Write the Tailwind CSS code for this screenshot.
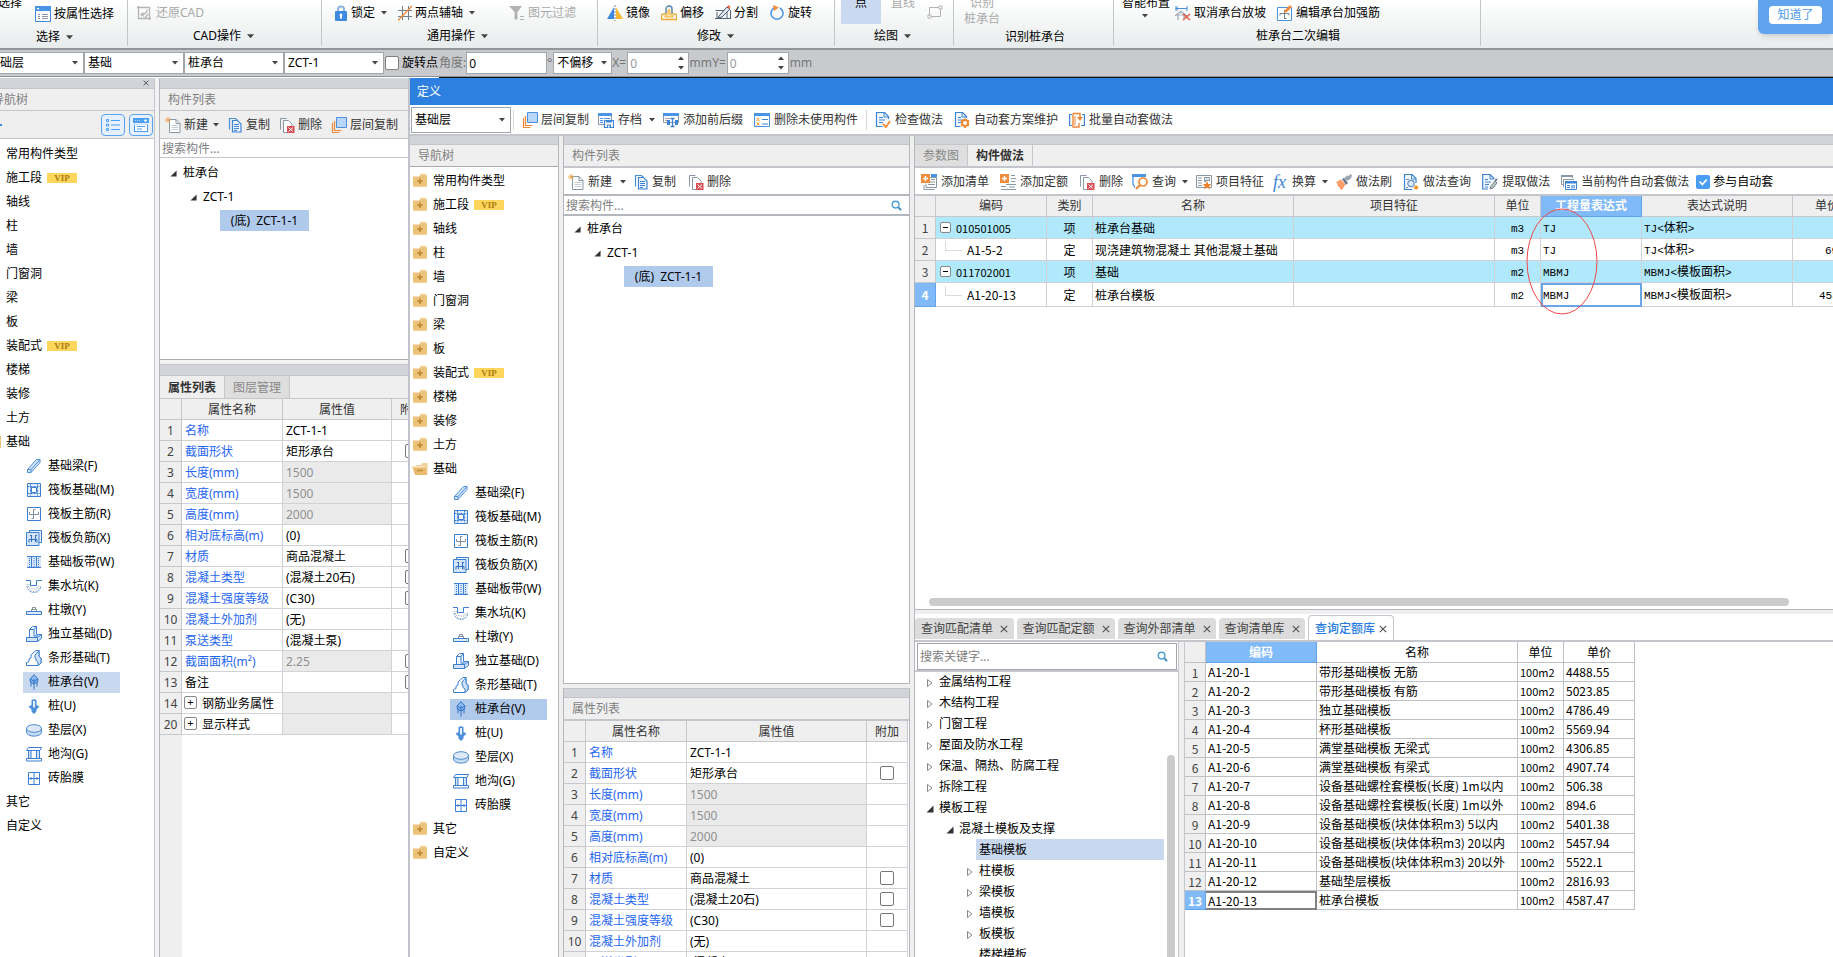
<!DOCTYPE html>
<html lang="zh-CN">
<head>
<meta charset="utf-8">
<title>定义</title>
<script src="https://cdn.jsdelivr.net/npm/@tailwindcss/browser@4"></script>
</head>
<body class="h-screen overflow-hidden flex flex-col relative bg-white text-black text-[12px] leading-[20px] whitespace-nowrap font-['Noto_Sans','Noto_Sans_CJK_SC',sans-serif]">

<svg class="hidden" xmlns="http://www.w3.org/2000/svg">
  <defs>
  <symbol id="i-select" viewBox="0 0 16 16"><path d="M.5.5h15v15H.5z" fill="#fff" stroke="#3f87da"/><path d="M0 0h16v5H0z" fill="#4a94e8"/><path d="M1.500 2h3l-1.500 2z" fill="#fff"/><path d="M3 8.500h2M7 8.500h6M3 10.500h2M7 10.500h6M3 12.500h2M7 12.500h6" stroke="#8a97a5"/></symbol>
  <symbol id="i-cad" viewBox="0 0 16 16"><path d="M2.500 1v12.500H15M1 2.500h12.500V15" fill="none" stroke="#b5b5b5" stroke-width="1.300"/><path d="M5 9.500c4 0 6-2 6-5M9 13l3-4" stroke="#b5b5b5" fill="none" stroke-width="1.300"/><path d="M4 9.500l3.500-2.500v5z" fill="#b5b5b5"/></symbol>
  <symbol id="i-lock" viewBox="0 0 16 16"><path d="M5 7V4.500a3 3 0 016 0V7" fill="none" stroke="#8fb4de" stroke-width="2"/><rect x="2" y="6" width="12" height="10" rx="1" fill="#3d8ae0"/><path d="M8 8.500a1.500 1.500 0 011 2.500v2.500H7V11a1.500 1.500 0 011-2.500z" fill="#fff"/></symbol>
  <symbol id="i-axis" viewBox="0 0 16 16"><path d="M5.500 1v14M11.500 1v14M1 5.500h14M1 11.500h14" stroke="#727f8c"/><path d="M1 15.500L15 1" stroke="#ee8a3c" stroke-width="1.300"/></symbol>
  <symbol id="i-filter" viewBox="0 0 16 16"><path d="M0 1h13L8.500 7v7.500h-3V7z" fill="#b3b3b3"/><path d="M11 11.500h4M11 14.500h4" stroke="#b3b3b3"/></symbol>
  <symbol id="i-mirror" viewBox="0 0 16 16"><path d="M7 2v12H0z" fill="#3d8ae0"/><path d="M9 2v12h7z" fill="#f9b934"/><path d="M8 0v16" stroke="#888" stroke-dasharray="2 1"/></symbol>
  <symbol id="i-offset" viewBox="0 0 16 16"><path d="M5 8.500V4a3 3 0 016 0v4.500l4.500 1V14.500H.5v-5z" fill="none" stroke="#f4a72d" stroke-width="1.300"/><path d="M7 9V5.500a1 1 0 012 0V9l3 1.500v1.500H4v-1.500z" fill="#fbdf9a" stroke="#f4b13d"/><path d="M5 8.500V4a3 3 0 016 0v4.500" fill="none" stroke="#4a94e0" stroke-width="1.300"/></symbol>
  <symbol id="i-split" viewBox="0 0 16 16"><path d="M.5 5.500h9M12 7v6.500H2V7M0 13.500h16M15.500 5v8" fill="none" stroke="#55637a"/><path d="M4 11l8-9 3 2-8 8-4 1z" fill="#dfe7f1" stroke="#4a5568"/><path d="M12 1.500l1.500-1.500 2 2L14 4z" fill="#e76f3c"/></symbol>
  <symbol id="i-rotate" viewBox="0 0 16 16"><path d="M11 3a6 6 0 11-6 0" fill="none" stroke="#4c97e6" stroke-width="1.600"/><path d="M4 0l6 2.500L5 6z" fill="#f2913d"/></symbol>
  <symbol id="i-rect" viewBox="0 0 16 16"><path d="M2.500 3.500h11v9h-11z" fill="none" stroke="#b3b3b3"/><path d="M12 2h3v3h-3zM1 11h3v3H1z" fill="#fff" stroke="#b3b3b3"/></symbol>
  <symbol id="i-cancel" viewBox="0 0 16 16"><path d="M1 1v5M1 3.500h11M3 1.500l-2 2 2 2M12 1v5" fill="none" stroke="#4a8fd8"/><path d="M0 11l6-5 6 5M3 9v6M9 9v4" fill="#d5dbe2" stroke="#8b97a5"/><path d="M8 9l7 6M15 9l-7 6" stroke="#e25b45" stroke-width="1.500"/></symbol>
  <symbol id="i-edit" viewBox="0 0 16 16"><path d="M.5 2.500h14v13H.5z" fill="#fff" stroke="#4a94e0"/><path d="M7.500 5v9M3 8.500h9M3 8.500v2M12 8.500v2M9.500 13.500h-2" fill="none" stroke="#6e7d8d"/><path d="M7 8l1-3 5-5 2 2-5 5z" fill="#f28b3b"/></symbol>
  <symbol id="i-list" viewBox="0 0 16 16"><path d="M1.500 2.500h2v2h-2zM1.500 7h2v2h-2zM1.500 11.500h2v2h-2z" fill="none" stroke="#4a9df0"/><path d="M6 3.500h9M6 8h9M6 12.500h9" stroke="#4a9df0"/></symbol>
  <symbol id="i-panel" viewBox="0 0 16 16"><path d="M0 1h16v5H0zM1 7.500h14V15H1z" fill="#4a9df0"/><path d="M2 3.500h1M4 3.500h1M6 3.500h1M11 3h3l-1.500 2z" stroke="#fff" fill="#fff" stroke-width=".6"/><path d="M2 7.500h12V14H2z" fill="#fff"/><path d="M4 9.500h8M4 12h5" stroke="#4a9df0"/></symbol>
  <symbol id="i-new" viewBox="0 0 16 16"><path d="M4.500 2.500h6.500l4 4v9H4.500z" fill="#fff" stroke="#8a98a6"/><path d="M11 2.500v4h4" fill="none" stroke="#8a98a6"/><path d="M6.500 8.500h7M6.500 10.500h7M6.500 12.500h7" stroke="#c8cfd6"/><path d="M3 0v6M0 3h6M1 1l4 4M5 1L1 5" stroke="#f0982d" stroke-dasharray="1 .5"/></symbol>
  <symbol id="i-copy" viewBox="0 0 16 16"><path d="M2.500 12.500V1.500h6l2 2" fill="none" stroke="#4a8ed8" stroke-width="1.200"/><path d="M5.500 3.500h5l3.500 3.500v8H5.500z" fill="#eef5fd" stroke="#3d84d4" stroke-width="1.200"/><path d="M7 7.500h5M7 9.500h5M7 11.500h5M7 13.500h3" stroke="#3d84d4"/></symbol>
  <symbol id="i-del" viewBox="0 0 16 16"><path d="M1.500 12.500V1.500h6" fill="none" stroke="#8a98a6"/><path d="M4.500 3.500h5l3.500 3.500v8.500H4.500z" fill="#fff" stroke="#8a98a6"/><path d="M8 9h7.500v7H8z" fill="#d84c52"/><path d="M9.500 10.500l4.500 4M14 10.500l-4.500 4" stroke="#fff"/></symbol>
  <symbol id="i-layer" viewBox="0 0 16 16"><path d="M1.500 6v9.500h7M3.500 4v9.500h7" fill="none" stroke="#ee8738" stroke-width="1.200"/><path d="M5.500.5h10v10h-10z" fill="#b8d5fa" stroke="#4a8fe0"/></symbol>
  <symbol id="i-archive" viewBox="0 0 16 16"><path d="M.5 1.500h13v11H.5z" fill="#fff" stroke="#8a98a6"/><path d="M0 1h14v3H0z" fill="#4a94e8"/><path d="M2 6.500h3M2 8.500h3M2 10.500h3M6 6.500h6" stroke="#4a94e8"/><path d="M6.500 8.500h9v7h-9z" fill="#fff" stroke="#3d84d4" stroke-width="1.200"/><path d="M8 8.500h6v2H8zM9 12.500h4v3H9z" fill="#3d84d4"/><path d="M10 13.500h1.500v2H10z" fill="#fff"/></symbol>
  <symbol id="i-affix" viewBox="0 0 16 16"><path d="M.5 1.500h15v9H.5z" fill="#fff" stroke="#8a98a6"/><path d="M0 1h16v3H0z" fill="#4a94e8"/><path d="M2 6.500h5M2 8.500h5" stroke="#9aa7b3"/><path d="M4 8h3v5H4zM12 8h3v5h-3z" fill="#3d84d4"/><path d="M7.500 6.500h4M7.500 14.500h4M9.500 6.500v8" stroke="#3d84d4" stroke-width="1.300"/></symbol>
  <symbol id="i-unused" viewBox="0 0 16 16"><path d="M.5 1.500h15v13H.5z" fill="#fff" stroke="#4a94e8"/><path d="M0 1h16v3H0z" fill="#4a94e8"/><path d="M2.500 6l3 3M5.500 6l-3 3M2.500 10.500l3 3M5.500 10.500l-3 3" stroke="#f0982d"/><path d="M8 7.500h6M8 12h6" stroke="#3d84d4"/></symbol>
  <symbol id="i-check" viewBox="0 0 16 16"><path d="M13.500 7V4.500l-4-4h-8v14h6" fill="#f3f8fe" stroke="#3d84d4" stroke-width="1.200"/><path d="M9 1v4h4.500M4 5.500h4M4 8h6M4 10.500h4" fill="none" stroke="#3d84d4"/><path d="M8 12l3 3 4-6" fill="none" stroke="#f08a35" stroke-width="1.800"/></symbol>
  <symbol id="i-gear" viewBox="0 0 16 16"><path d="M12.500 6V4.500l-4-4h-7v14h5" fill="#f3f8fe" stroke="#3d84d4" stroke-width="1.200"/><path d="M8 1v4h4.500M4 5.500h3M4 8h5M4 10.500h3" fill="none" stroke="#3d84d4"/><circle cx="11" cy="11" r="3" fill="#fff" stroke="#f08a35" stroke-width="2"/><path d="M11 6.500v2M11 13.500v2.500M7 8.500l1.500 1M13.500 12.500l1.500 1M15 8.500l-1.500 1M8.500 12.500L7 13.500" stroke="#f08a35" stroke-width="1.800"/></symbol>
  <symbol id="i-batch" viewBox="0 0 16 16"><path d="M3 13.500H.6V2.500H3M13 2.500h2.400v11H12" fill="none" stroke="#3d84d4" stroke-width="1.200"/><path d="M4 1.500v13.500h6V11M4 1.500h7v4.500" fill="#fff" stroke="#ee8738" stroke-width="1.400"/><path d="M8 5h6l-3 4z" fill="#ee8738"/><path d="M6 4v9" stroke="#ee8738"/></symbol>
  <symbol id="i-addlist" viewBox="0 0 16 16"><path d="M7 3.500h8.500v10H5v-4" fill="#fff" stroke="#8a98a6"/><path d="M10 0h6v3h-6z" fill="#4a94e8"/><path d="M10 5.500h4M7 8h7M7 10.500h7M3 11v4.500h10.500" fill="none" stroke="#8a98a6"/><path d="M0 0h9v9H0z" fill="#ef8e3f"/><path d="M4.500 2v5M2 4.500h5" stroke="#fff" stroke-width="1.400"/></symbol>
  <symbol id="i-addquota" viewBox="0 0 16 16"><path d="M11 1.500h4M11 4.500h5M11 7.500h4M6 10.500h10M1 12.500h5M1 15.500h15M9 13h6" stroke="#8a98a6"/><path d="M0 0h9v9H0z" fill="#ef8e3f"/><path d="M4.500 2v5M2 4.500h5" stroke="#fff" stroke-width="1.400"/></symbol>
  <symbol id="i-query" viewBox="0 0 16 16"><path d="M1 1v9l2 3.500" fill="none" stroke="#4a94e0" stroke-width="1.300"/><path d="M0 0h14v3H0z" fill="#4a94e0"/><circle cx="11" cy="8" r="4" fill="#fff" stroke="#f08a35" stroke-width="1.700"/><path d="M8 11L4 15" stroke="#f08a35" stroke-width="2.200"/></symbol>
  <symbol id="i-feature" viewBox="0 0 16 16"><path d="M.5 1.500h15v12H.5z" fill="#fff" stroke="#8a98a6"/><path d="M2 4h4M2 6.500h4M2 9h4M2 11.500h4M8 7.500h2" stroke="#8a98a6"/><path d="M8.500 3.500h5v3h-5z" fill="#dfe4ea" stroke="#8a98a6"/><path d="M11 7l1.300 3 3.200.2-2.500 2 1 3.300-3-1.900-3 1.900 1-3.300-2.500-2 3.200-.2z" fill="#f08127"/></symbol>
  <symbol id="i-brush" viewBox="0 0 16 16"><path d="M0 8l5-2.500 4.500 5L6 16l-2-1-.5-2-2-1L1.500 10z" fill="#ff9d6b"/><path d="M6 5l2-1 4 5-2 2z" fill="#68798a"/><path d="M8 4l3 3 4-2.500 1-3.500-2-1-1 2-1.500-.5z" fill="#9aa7b3"/></symbol>
  <symbol id="i-mquery" viewBox="0 0 16 16"><path d="M13 9V4.500L9 .5H1.500v15H9" fill="#f3f8fe" stroke="#3d84d4" stroke-width="1.200"/><path d="M8.500 1v4H13" fill="none" stroke="#3d84d4"/><circle cx="8" cy="9.500" r="3.200" fill="#dbe9f8" stroke="#6b8fc0" stroke-width="1.200"/><path d="M3 5.500h3M3 13.500h2" stroke="#8a98a6"/><path d="M13 11l3 2.500-3 2.500-2.500-2.500z" fill="#f0982d"/></symbol>
  <symbol id="i-extract" viewBox="0 0 16 16"><path d="M12 5V4.500l-4-4H.7v14.500H6" fill="#f3f8fe" stroke="#3d84d4" stroke-width="1.200"/><path d="M8 1v4h4M3 5.500h3M3 8h6M3 10.500h4M3 13h3" fill="none" stroke="#3d84d4"/><path d="M8 15l1-3 4-5 2 2-4 5z" fill="#b7c9c7" stroke="#71808c"/><path d="M13 7l2-2" stroke="#71808c" stroke-width="2"/></symbol>
  <symbol id="i-auto" viewBox="0 0 16 16"><path d="M3 10.500H.5v-9h11V4" fill="none" stroke="#8a98a6"/><path d="M0 1h12v2H0z" fill="#8a98a6"/><path d="M2.500 13V5.500H13" fill="none" stroke="#8a98a6"/><path d="M4.500 7.500h11v8h-11z" fill="#fff" stroke="#3d84d4"/><path d="M4 7h12v2.500H4z" fill="#3d84d4"/><path d="M6 11.500h3M6 13.500h3" stroke="#3d84d4"/><path d="M10 11h4v3.500h-4z" fill="#8ab8ec"/></symbol>
  <symbol id="i-folder" viewBox="0 0 16 16"><path d="M8 1.500q0-1 1-1h4q1 0 1 1V2H8z" fill="#f3ddb0"/><path d="M1 3.500h6l1.500-1.500H14q1 0 1 1V13q0 .8-1 .8H2Q1 13.800 1 13z" fill="#edc27b"/><path d="M8 5.500v5.500M5.300 8.200h5.400" stroke="#c08c35" stroke-width="1.700"/></symbol>
  <symbol id="i-open" viewBox="0 0 16 16"><path d="M4 4h5l1.500-2H15.500V13H4z" fill="#f0cf92"/><path d="M0 5h13.500l1.500 9H3z" fill="#e8bb6e"/><path d="M0 5h13.500l.3 1.500H1z" fill="#f9e8c6"/><path d="M5 9.500h6" stroke="#c08c35" stroke-width="1.500"/></symbol>
  <symbol id="i-search" viewBox="0 0 12 12"><circle cx="5" cy="5" r="3.700" fill="none" stroke="#4a9fd0" stroke-width="1.500"/><path d="M8 8l3 3" stroke="#3c86b8" stroke-width="2"/></symbol>
  <symbol id="i-exp" viewBox="0 0 8 8"><path d="M7.500.5v7H.5z" fill="#333"/></symbol>
  <symbol id="i-col" viewBox="0 0 8 8"><path d="M1.500.5v7L6 4z" fill="#fff" stroke="#888"/></symbol>
  <symbol id="i-down" viewBox="0 0 6 4"><path d="M0 0h6L3 3.500z" fill="#444"/></symbol>
  <symbol id="i-x" viewBox="0 0 8 8"><path d="M.8.8l6.400 6.400M7.200.8L.8 7.200" stroke="#555" stroke-width="1.200"/></symbol>

  <symbol id="s-0" viewBox="0 0 16 16"><path d="M1.500 14.500v-3L10.500 1.500h3.500v3L5 14.500z" fill="#d3e4f8" stroke="#4e90dc"/><path d="M1.500 11.500H5v3M5 11.500l9-10" fill="none" stroke="#4e90dc"/></symbol>
  <symbol id="s-1" viewBox="0 0 16 16"><path d="M1.500 1.500h13v13h-13z" fill="#e4eefa" stroke="#3d7fd0"/><path d="M4.500 1.500v13M11.500 1.500v13M1.500 4.500h13M1.500 11.500h13" stroke="#3d7fd0" stroke-dasharray="2 1"/><path d="M5.500 5.500h5v5h-5z" fill="#fff" stroke="#3d7fd0"/></symbol>
  <symbol id="s-2" viewBox="0 0 16 16"><path d="M1.500 1.500h13v13h-13z" fill="#fff" stroke="#3d7fd0"/><path d="M9.500 3.500h-2v9h-2M3.500 6v2.500h9V6" fill="none" stroke="#8291a0"/></symbol>
  <symbol id="s-3" viewBox="0 0 16 16"><path d="M3.500.5h12v12h-12z" fill="#e8f1fb" stroke="#3d7fd0"/><path d="M.5 2.500h12.500v13H.5z" fill="#d3e4f8" stroke="#3d7fd0"/><path d="M5.500 5v7M9.500 5v7M3 12.500V9.500h8v3M5.500 5.500H4M9.500 5.500h1.500" fill="none" stroke="#2f72c4"/></symbol>
  <symbol id="s-4" viewBox="0 0 16 16"><path d="M1 2h14v11H1z" fill="#d9e8f9"/><path d="M1 2.500h14M1 13.500h14M5.500 2.500v11M10.500 2.500v11" stroke="#3d7fd0" fill="none"/><path d="M3.500 4v9M8 4v9M12.500 4v9" stroke="#3d7fd0" stroke-dasharray="1 1"/></symbol>
  <symbol id="s-5" viewBox="0 0 16 16"><path d="M0 2.500h4.500v5h6v-5H16" fill="none" stroke="#3d7fd0"/><path d="M1 6l4 7 6 1 4-7M3 6l3 5 5 0 2-4" fill="none" stroke="#8b9aab" stroke-dasharray="1 1.500"/><path d="M1 8c1 5 4 6.500 7 6.500S14 13 15 8" fill="none" stroke="#6ba0dd" stroke-dasharray="2 1"/></symbol>
  <symbol id="s-6" viewBox="0 0 16 16"><path d="M.5 9.500h15v3H.5z" fill="#dce9f9" stroke="#3d7fd0"/><path d="M5.500 9V7.500h5V9M6.500 7V5.500h3V7" fill="none" stroke="#8291a0"/></symbol>
  <symbol id="s-7" viewBox="0 0 16 16"><path d="M.5 11.500v4h11l4-3v-4h-4l-1 3z" fill="#d3e4f8" stroke="#3d7fd0"/><path d="M3.500 11.500v-8l3-3h4v8l-2 3z" fill="#eef5fd" stroke="#3d7fd0"/><path d="M.5 11.500h11l4-3M11.500 11.500v4M3.500 3.500h4.500v7M8 3.500l2.500-3" fill="none" stroke="#3d7fd0"/></symbol>
  <symbol id="s-8" viewBox="0 0 16 16"><path d="M.5 15.500v-3l2.500-1V9l2-1V5l5-4.500h3v6l2 1.500v5l-3 2.500z" fill="#fff" stroke="#3d7fd0"/><path d="M9 5l4-4.500v6l2 1.500v5l-3 2.500v-3.500l-2-1.500V8.500L9 8z" fill="#cfe1f6" stroke="#3d7fd0"/></symbol>
  <symbol id="s-9" viewBox="0 0 16 16"><path d="M8 .7L12 5 11.500 8 8 10 4.500 8 4 5z" fill="#8fbcf0" stroke="#2f72c4"/><path d="M8 5v10.500M5 7.500v5M11 7.500v5M4 4.500l4 3 4-3" fill="none" stroke="#2f72c4"/></symbol>
  <symbol id="s-10" viewBox="0 0 16 16"><path d="M5.500 2Q8 .5 10.500 2v5l3 1.500-3 3v2L8 16l-2.500-2.500v-2l-3-3 3-1.500z" fill="#4e90dc"/><path d="M7 3h2v6.500H7z" fill="#e5effb"/></symbol>
  <symbol id="s-11" viewBox="0 0 16 16"><path d="M.5 6v4c0 5.500 15 5.500 15 0V6" fill="#c6dbf4" stroke="#4e8bd2"/><ellipse cx="8" cy="6.500" rx="7.500" ry="3.800" fill="#dde9f8" stroke="#4e8bd2"/></symbol>
  <symbol id="s-12" viewBox="0 0 16 16"><path d="M3 5h2v7H3zM11 5h2v7h-2z" fill="#cfe1f6"/><path d="M2.500 1.500h13l-1.500 3H.5zM2.500 4.500v8M5 4.500v8M10.500 4.500v8M13.500 4.500v8M.5 12.500h15v2.500H.5z" fill="none" stroke="#3d7fd0"/></symbol>
  <symbol id="s-13" viewBox="0 0 16 16"><path d="M2.500 2.500h11v12h-11z" fill="#fff" stroke="#3d7fd0"/><path d="M8 2.500v12M2.500 8.500h11M5 7v3M11 7v3" stroke="#3d7fd0" fill="none"/></symbol>
  </defs>
</svg>

<!-- ribbon -->
<header class="h-[50px] shrink-0 flex items-start bg-linear-to-b from-white to-[#e8ecec] border-b-2 border-[#92969a] overflow-hidden">
  <section class="w-[128px] h-[46px] shrink-0 border-r border-[#c3c6c8] flex flex-col">
    <div class="flex h-[27px] items-center">
      <span class="w-[35px] h-[27px] shrink-0 overflow-hidden"><span class="-ml-[2px] -mt-[7px] block">选择</span></span>
      <button class="flex items-center gap-[3px]"><svg class="size-4"><use href="#i-select"/></svg>按属性选择</button>
    </div>
    <button class="flex items-center gap-[6px] pl-[36px]">选择<svg class="w-[7px] h-[5px]"><use href="#i-down"/></svg></button>
  </section>
  <section class="w-[194px] h-[46px] shrink-0 border-r border-[#c3c6c8] flex flex-col">
    <button class="flex h-[27px] items-center gap-[4px] pl-[8px] text-[#a9a9a9]"><svg class="size-4"><use href="#i-cad"/></svg>还原CAD</button>
    <button class="flex items-center gap-[6px] pl-[65px]">CAD操作<svg class="w-[7px] h-[5px]"><use href="#i-down"/></svg></button>
  </section>
  <section class="w-[276px] h-[46px] shrink-0 border-r border-[#c3c6c8] flex flex-col">
    <div class="flex h-[27px] items-center pl-[11px]">
      <button class="flex items-center gap-[2px] w-[64px]"><svg class="size-4"><use href="#i-lock"/></svg>锁定<svg class="ml-1 w-[6px] h-[4px]"><use href="#i-down"/></svg></button>
      <button class="flex items-center gap-[2px] w-[112px]"><svg class="size-4"><use href="#i-axis"/></svg>两点辅轴<svg class="ml-1 w-[6px] h-[4px]"><use href="#i-down"/></svg></button>
      <button class="flex items-center gap-[3px] text-[#a9a9a9]"><svg class="size-4"><use href="#i-filter"/></svg>图元过滤</button>
    </div>
    <button class="flex items-center gap-[6px] pl-[105px]">通用操作<svg class="w-[7px] h-[5px]"><use href="#i-down"/></svg></button>
  </section>
  <section class="w-[237px] h-[46px] shrink-0 border-r border-[#c3c6c8] flex flex-col">
    <div class="flex h-[27px] items-center pl-[9px] gap-[11px]">
      <button class="flex items-center gap-[3px]"><svg class="size-4"><use href="#i-mirror"/></svg>镜像</button>
      <button class="flex items-center gap-[3px]"><svg class="size-4"><use href="#i-offset"/></svg>偏移</button>
      <button class="flex items-center gap-[3px]"><svg class="size-4"><use href="#i-split"/></svg>分割</button>
      <button class="flex items-center gap-[3px]"><svg class="size-4"><use href="#i-rotate"/></svg>旋转</button>
    </div>
    <button class="flex items-center gap-[6px] pl-[99px]">修改<svg class="w-[7px] h-[5px]"><use href="#i-down"/></svg></button>
  </section>
  <section class="w-[119px] h-[46px] shrink-0 border-r border-[#c3c6c8] flex flex-col">
    <div class="flex h-[27px] items-start pl-[6px]">
      <button class="h-[24px] w-[40px] bg-[#cad9f0] flex justify-center"><span class="-mt-[7px]">点</span></button>
      <button class="-mt-[7px] ml-[10px] text-[#a9a9a9]">直线</button>
      <svg class="ml-[12px] mt-[4px] size-4"><use href="#i-rect"/></svg>
    </div>
    <button class="flex items-center gap-[6px] pl-[39px]">绘图<svg class="w-[7px] h-[5px]"><use href="#i-down"/></svg></button>
  </section>
  <section class="w-[160px] h-[46px] shrink-0 border-r border-[#c3c6c8] flex flex-col">
    <button class="h-[29px] w-[36px] ml-[10px] text-[#a9a9a9] text-center leading-[16px]"><span class="block -mt-[5px]">识别</span><span class="block">桩承台</span></button>
    <span class="pl-[51px]">识别桩承台</span>
  </section>
  <section class="w-[367px] h-[46px] shrink-0 border-r border-[#c3c6c8] flex flex-col">
    <div class="flex h-[29px] items-start pl-[7px]">
      <button class="w-[50px] flex flex-col -mt-[7px]">智能布置<svg class="ml-[21px] mt-px w-[6px] h-[4px]"><use href="#i-down"/></svg></button>
      <button class="flex items-center gap-[3px] ml-[4px] mt-[3px]"><svg class="size-4"><use href="#i-cancel"/></svg>取消承台放坡</button>
      <button class="flex items-center gap-[3px] ml-[11px] mt-[3px]"><svg class="size-4"><use href="#i-edit"/></svg>编辑承台加强筋</button>
    </div>
    <span class="pl-[142px]">桩承台二次编辑</span>
  </section>
</header>
<div class="absolute right-0 top-0 w-[75px] h-[34px] rounded-bl-md bg-[#62a3ee] shadow-md flex justify-center pt-[6px]">
  <button class="w-[53px] h-[18px] rounded-sm bg-white text-[#4b9ae8] leading-[18px]">知道了</button>
</div>

<!-- option bar -->
<div class="h-[27px] shrink-0 bg-[#c8cacd] border-b border-[#8f9398] flex items-center text-[#777]">
  <label class="relative w-[84px] h-[22px]"><select aria-label="楼层" class="appearance-none w-full h-full bg-white border border-[#a2a6ab] border-l-0 -indent-3 text-black outline-none"><option>基础层</option></select><svg class="absolute right-[6px] top-[9px] w-[6px] h-[4px]"><use href="#i-down"/></svg></label>
  <label class="relative w-[100px] h-[22px]"><select aria-label="构件类别" class="appearance-none w-full h-full bg-white border border-[#a2a6ab] pl-[3px] text-black outline-none"><option>基础</option></select><svg class="absolute right-[6px] top-[9px] w-[6px] h-[4px]"><use href="#i-down"/></svg></label>
  <label class="relative w-[100px] h-[22px]"><select aria-label="构件类型" class="appearance-none w-full h-full bg-white border border-[#a2a6ab] pl-[3px] text-black outline-none"><option>桩承台</option></select><svg class="absolute right-[6px] top-[9px] w-[6px] h-[4px]"><use href="#i-down"/></svg></label>
  <label class="relative w-[100px] h-[22px]"><select aria-label="构件" class="appearance-none w-full h-full bg-white border border-[#a2a6ab] pl-[3px] text-black outline-none"><option>ZCT-1</option></select><svg class="absolute right-[6px] top-[9px] w-[6px] h-[4px]"><use href="#i-down"/></svg></label>
  <label class="flex items-center gap-[3px] ml-px text-black"><input type="checkbox" class="appearance-none size-[14px] rounded-xs border border-[#808080] bg-white">旋转点</label>
  <label class="flex items-center ml-px">角度:<input value="0" class="w-[81px] h-[22px] bg-white border border-[#a2a6ab] px-[2px] text-black outline-none"></label>
  <span class="w-[6px]">°</span>
  <label class="relative w-[59px] h-[22px]"><select aria-label="偏移方式" class="appearance-none w-full h-full bg-white border border-[#a2a6ab] pl-[3px] text-black outline-none"><option>不偏移</option></select><svg class="absolute right-[5px] top-[9px] w-[6px] h-[4px]"><use href="#i-down"/></svg></label>
  <label class="relative flex items-center">X=<input value="0" class="ml-px w-[62px] h-[22px] bg-white border border-[#a2a6ab] px-[2px] text-[#999] outline-none"><svg class="absolute right-[5px] top-[4px] w-[6px] h-[4px] rotate-180"><use href="#i-down"/></svg><svg class="absolute right-[5px] bottom-[4px] w-[6px] h-[4px]"><use href="#i-down"/></svg></label>
  <span class="w-[23px] text-center">mm</span>
  <label class="relative flex items-center">Y=<input value="0" class="ml-px w-[62px] h-[22px] bg-white border border-[#a2a6ab] px-[2px] text-[#999] outline-none"><svg class="absolute right-[5px] top-[4px] w-[6px] h-[4px] rotate-180"><use href="#i-down"/></svg><svg class="absolute right-[5px] bottom-[4px] w-[6px] h-[4px]"><use href="#i-down"/></svg></label>
  <span class="ml-px">mm</span>
</div>
<div class="h-px shrink-0 bg-[#111] ml-[439px]"></div>

<!-- main window -->
<main class="flex-1 min-h-0 flex">
  <nav class="w-[155px] shrink-0 border-r border-[#c4c6cc] flex flex-col overflow-hidden" aria-label="导航树">
    <div class="h-[11px] shrink-0 bg-[#d3d4d9] border-b border-[#c4c6cc] flex justify-end items-center pr-[5px]"><button aria-label="关闭"><svg class="size-[6px]"><use href="#i-x"/></svg></button></div>
    <h2 class="h-[22px] shrink-0 bg-[#efefef] border-b border-[#c4c6cc] text-[#808080] -indent-2 leading-[22px]">导航树</h2>
    <div class="h-[28px] shrink-0 bg-[#efefef] border-b border-[#c4c6cc] flex items-center gap-[4px] pr-px">
      <span class="w-[2px] h-[2px] bg-[#3d8ae0] mr-auto"></span>
      <button aria-label="列表" class="w-[24px] h-[22px] border border-[#58a3f0] rounded-sm bg-[#e6f1fd] flex items-center justify-center"><svg class="size-4"><use href="#i-list"/></svg></button>
      <button aria-label="面板" class="w-[24px] h-[22px] border border-[#58a3f0] rounded-sm bg-[#e6f1fd] flex items-center justify-center"><svg class="size-4"><use href="#i-panel"/></svg></button>
    </div>
    <ul id="navA" class="pt-[3px]"></ul>
  </nav>
  <div class="w-[4px] shrink-0 bg-[#f2f2f2]"></div>
  <div class="flex-1 min-w-0 flex flex-col border-l border-[#b4b7bd] overflow-hidden">
    <div class="h-[11px] shrink-0 bg-[#d3d4d9] border-b border-[#c4c6cc]"></div>
    <h2 class="h-[22px] shrink-0 bg-[#efefef] border-b border-[#c4c6cc] text-[#808080] pl-[8px] leading-[22px]">构件列表</h2>
    <div class="h-[28px] shrink-0 bg-[#efefef] border-b border-[#c4c6cc] pt-px flex items-center text-[#333]">
      <button class="flex items-center gap-[3px] ml-[5px]"><svg class="size-4"><use href="#i-new"/></svg>新建<svg class="ml-[2px] w-[6px] h-[4px]"><use href="#i-down"/></svg></button>
      <button class="flex items-center gap-[3px] ml-[8px]"><svg class="size-4"><use href="#i-copy"/></svg>复制</button>
      <button class="flex items-center gap-[3px] ml-[9px]"><svg class="size-4"><use href="#i-del"/></svg>删除</button>
      <button class="flex items-center gap-[3px] ml-[9px]"><svg class="size-4"><use href="#i-layer"/></svg>层间复制</button>
    </div>
    <input aria-label="搜索构件" placeholder="搜索构件..." class="h-[19px] shrink-0 w-full px-[2px] pt-px border-b border-[#c4c6cc] placeholder:text-[#808080] outline-none">
    <div class="h-[202px] shrink-0 border-b border-[#a9abb0] pt-[3px] leading-[24px]">
      <div class="flex items-center pl-[10px] gap-[6px]"><svg class="size-[7px]"><use href="#i-exp"/></svg>桩承台</div>
      <div class="flex items-center pl-[30px] gap-[6px]"><svg class="size-[7px]"><use href="#i-exp"/></svg>ZCT-1</div>
      <div class="ml-[60px] mt-px w-[89px] h-[21px] bg-[#b0caec] leading-[21px] text-center">(底)&nbsp; ZCT-1-1</div>
    </div>
    <div class="h-[4px] shrink-0 bg-[#f2f2f2]"></div>
    <div class="h-[12px] shrink-0 bg-[#d3d4d9] border-y border-[#c4c6cc]"></div>
    <div class="h-[23px] shrink-0 bg-[#efefef] border-b border-[#c4c6cc] flex leading-[22px]" role="tablist">
      <button role="tab" class="w-[65px] border-r border-[#c4c6cc] font-bold text-[#333] pt-px">属性列表</button>
      <button role="tab" class="w-[65px] border-r border-[#c4c6cc] bg-[#dedede] text-[#888] pt-px">图层管理</button>
    </div>
    <table id="propA" class="table-fixed w-[273px] border-separate border-spacing-0 shrink-0"></table>
    <div class="flex-1 w-[22px] bg-[#efefef]"></div>
  </div>
</main>

<!-- definition window -->
<div role="dialog" aria-label="定义" class="absolute left-[408px] right-0 top-[78px] bottom-0 bg-[#efefef] border-l-2 border-[#c0c3cc] flex flex-col overflow-hidden">
  <h1 class="h-[27px] shrink-0 -ml-[2px] bg-[#2d7fe0] text-white pl-[9px] leading-[27px]">定义</h1>
  <div class="h-[31px] shrink-0 bg-white border-b-2 border-[#c4c6cc] pt-px flex items-center text-[#333]">
    <label class="relative ml-px w-[100px] h-[26px]"><select aria-label="楼层" class="appearance-none w-full h-full bg-white border border-[#a2a6ab] pl-[3px] text-black outline-none"><option>基础层</option></select><svg class="absolute right-[6px] top-[11px] w-[6px] h-[4px]"><use href="#i-down"/></svg></label>
    <i class="w-px h-[20px] bg-[#d8d8d8] ml-[2px] mr-[8px]"></i>
    <button class="flex items-center gap-[3px] mr-[9px]"><svg class="size-4"><use href="#i-layer"/></svg>层间复制</button>
    <button class="flex items-center gap-[4px] mr-[7px]"><svg class="size-4"><use href="#i-archive"/></svg>存档<svg class="ml-[3px] w-[6px] h-[4px]"><use href="#i-down"/></svg></button>
    <button class="flex items-center gap-[4px] mr-[11px] ml-px"><svg class="size-4"><use href="#i-affix"/></svg>添加前后缀</button>
    <button class="flex items-center gap-[4px]"><svg class="size-4"><use href="#i-unused"/></svg>删除未使用构件</button>
    <i class="w-px h-[20px] bg-[#d8d8d8] mx-[8px]"></i>
    <button class="flex items-center gap-[4px] mr-[11px]"><svg class="size-4"><use href="#i-check"/></svg>检查做法</button>
    <button class="flex items-center gap-[4px] mr-[11px]"><svg class="size-4"><use href="#i-gear"/></svg>自动套方案维护</button>
    <button class="flex items-center gap-[4px]"><svg class="size-4"><use href="#i-batch"/></svg>批量自动套做法</button>
  </div>

  <div class="flex-1 min-h-0 flex">
    <nav aria-label="导航树" class="w-[149px] shrink-0 border-r border-[#b4b7bd] flex flex-col bg-white overflow-hidden">
      <div class="h-[9px] shrink-0 bg-[#d3d4d9] border-b border-[#c4c6cc]"></div>
      <h2 class="h-[22px] shrink-0 bg-[#efefef] border-b border-[#a9abb0] text-[#808080] pl-[8px] leading-[22px]">导航树</h2>
      <ul id="navB" class="pt-[2px]"></ul>
    </nav>
    <div class="w-[4px] shrink-0"></div>

    <div class="w-[347px] shrink-0 flex flex-col">
      <section class="flex-1 min-h-0 flex flex-col bg-white border-x border-b border-[#b4b7bd]">
        <div class="h-[9px] shrink-0 bg-[#d3d4d9] border-b border-[#c4c6cc]"></div>
        <h2 class="h-[23px] shrink-0 bg-[#efefef] border-b-2 border-[#c4c6cc] text-[#808080] pl-[8px] leading-[22px]">构件列表</h2>
        <div class="h-[28px] shrink-0 border-b-2 border-[#b4b7bd] pt-px flex items-center text-[#333]">
          <button class="flex items-center gap-[4px] ml-[4px]"><svg class="size-4"><use href="#i-new"/></svg>新建<svg class="ml-[4px] w-[6px] h-[4px]"><use href="#i-down"/></svg></button>
          <button class="flex items-center gap-[3px] ml-[7px]"><svg class="size-4"><use href="#i-copy"/></svg>复制</button>
          <button class="flex items-center gap-[3px] ml-[12px]"><svg class="size-4"><use href="#i-del"/></svg>删除</button>
        </div>
        <label class="h-[20px] shrink-0 border-b-2 border-[#b4b7bd] flex items-center pr-[7px]"><input aria-label="搜索构件" placeholder="搜索构件..." class="flex-1 px-[2px] pt-px placeholder:text-[#808080] outline-none"><svg class="size-[11px]"><use href="#i-search"/></svg></label>
        <div class="pt-px leading-[24px]">
          <div class="flex items-center pl-[10px] gap-[6px]"><svg class="size-[7px]"><use href="#i-exp"/></svg>桩承台</div>
          <div class="flex items-center pl-[30px] gap-[6px]"><svg class="size-[7px]"><use href="#i-exp"/></svg>ZCT-1</div>
          <div class="ml-[60px] mt-px w-[89px] h-[21px] bg-[#b0caec] leading-[21px] text-center">(底)&nbsp; ZCT-1-1</div>
        </div>
      </section>
      <div class="h-[4px] shrink-0"></div>
      <section class="h-[269px] shrink-0 flex flex-col bg-white border-x border-[#b4b7bd] overflow-hidden">
        <div class="h-[10px] shrink-0 bg-[#d3d4d9] border-y border-[#c4c6cc]"></div>
        <h2 class="h-[23px] shrink-0 bg-[#efefef] border-b-2 border-[#c4c6cc] text-[#808080] pl-[8px] leading-[22px]">属性列表</h2>
        <table id="propB" class="table-fixed w-[344px] border-separate border-spacing-0 shrink-0"></table>
      </section>
    </div>
    <div class="w-[4px] shrink-0"></div>

    <div class="flex-1 min-w-0 flex flex-col border-l border-[#b4b7bd]">
      <section class="flex-1 min-h-0 flex flex-col bg-white border-b border-[#b4b7bd] relative">
        <div class="h-[9px] shrink-0 bg-[#d3d4d9] border-b border-[#c4c6cc]"></div>
        <div class="h-[23px] shrink-0 bg-[#efefef] border-b-2 border-[#c4c6cc] flex" role="tablist">
          <button role="tab" class="w-[53px] border-r border-[#c4c6cc] bg-[#dfdfdf] text-[#888] pt-px">参数图</button>
          <button role="tab" class="w-[65px] border-r border-[#c4c6cc] font-bold text-[#333] pt-px">构件做法</button>
        </div>
        <div class="h-[28px] shrink-0 border-b-2 border-[#c4c6cc] pt-px flex items-center text-[#333] overflow-hidden">
          <button class="flex items-center gap-[4px] ml-[6px] mr-[11px]"><svg class="size-4"><use href="#i-addlist"/></svg>添加清单</button>
          <button class="flex items-center gap-[4px] mr-[11px]"><svg class="size-4"><use href="#i-addquota"/></svg>添加定额</button>
          <button class="flex items-center gap-[4px] mr-[9px]"><svg class="size-4"><use href="#i-del"/></svg>删除</button>
          <button class="flex items-center gap-[4px] mr-[8px]"><svg class="size-4"><use href="#i-query"/></svg>查询<svg class="ml-[2px] w-[6px] h-[4px]"><use href="#i-down"/></svg></button>
          <button class="flex items-center gap-[4px] mr-[9px]"><svg class="size-4"><use href="#i-feature"/></svg>项目特征</button>
          <button class="flex items-center mr-[8px]"><span class="w-[19px] text-[18px] italic text-[#3d84d4] font-['Liberation_Serif',serif] text-left">fx</span>换算<svg class="ml-[6px] w-[6px] h-[4px]"><use href="#i-down"/></svg></button>
          <button class="flex items-center gap-[4px] mr-[11px]"><svg class="size-4"><use href="#i-brush"/></svg>做法刷</button>
          <button class="flex items-center gap-[4px] mr-[11px]"><svg class="size-4"><use href="#i-mquery"/></svg>做法查询</button>
          <button class="flex items-center gap-[4px] mr-[11px]"><svg class="size-4"><use href="#i-extract"/></svg>提取做法</button>
          <button class="flex items-center gap-[4px] mr-[7px]"><svg class="size-4"><use href="#i-auto"/></svg>当前构件自动套做法</button>
          <label class="relative flex items-center gap-[3px] text-black"><input type="checkbox" checked class="appearance-none size-[14px] rounded-xs bg-[#4a9df5]"><svg class="absolute left-0 top-[3px] size-[14px] pointer-events-none" viewBox="0 0 14 14"><path d="M3.500 6.500L6.300 9.500 10.800 4.500" fill="none" stroke="#fff" stroke-width="1.800"/></svg>参与自动套</label>
        </div>
        <table id="method" class="table-fixed w-full border-separate border-spacing-0"></table>
        <div class="mt-auto mb-[3px] ml-[14px] mr-[44px] h-[8px] rounded-full bg-[#cbcbcb]"></div>
        <svg class="absolute left-[611px] top-[72px] w-[72px] h-[107px]" viewBox="0 0 72 107"><ellipse cx="36" cy="53.500" rx="35" ry="52.500" fill="none" stroke="#f04848"/></svg>
      </section>
      <div class="h-[4px] shrink-0"></div>

      <section class="h-[343px] shrink-0 flex flex-col bg-white">
        <div class="h-[28px] shrink-0 border-b-2 border-[#c4c6cc] flex items-end gap-[3px] text-[#444]" role="tablist">
          <button role="tab" class="w-[99px] h-[21px] mb-px rounded-t-sm bg-[#dcdcdc] flex items-center justify-center gap-[7px]">查询匹配清单<svg class="size-[8px]"><use href="#i-x"/></svg></button>
          <button role="tab" class="w-[98px] h-[21px] mb-px rounded-t-sm bg-[#dcdcdc] flex items-center justify-center gap-[7px]">查询匹配定额<svg class="size-[8px]"><use href="#i-x"/></svg></button>
          <button role="tab" class="w-[98px] h-[21px] mb-px rounded-t-sm bg-[#dcdcdc] flex items-center justify-center gap-[7px]">查询外部清单<svg class="size-[8px]"><use href="#i-x"/></svg></button>
          <button role="tab" class="w-[86px] h-[21px] mb-px rounded-t-sm bg-[#dcdcdc] flex items-center justify-center gap-[7px]">查询清单库<svg class="size-[8px]"><use href="#i-x"/></svg></button>
          <button role="tab" class="w-[86px] h-[25px] rounded-t-sm border border-b-0 border-[#c4c6cc] bg-white flex items-center justify-center gap-[4px] pt-px text-[#2a7de0] font-medium">查询定额库<svg class="size-[8px]"><use href="#i-x"/></svg></button>
        </div>
        <div class="flex-1 min-h-0 flex">
          <div class="w-[264px] shrink-0 border-r border-[#c4c6cc] flex flex-col">
            <div class="h-[30px] shrink-0 border-b-2 border-[#c4c6cc] p-px pl-[2px]"><label class="flex items-center h-[27px] border border-[#a2a6ab] pr-[8px]"><input aria-label="搜索关键字" placeholder="搜索关键字..." class="flex-1 px-[2px] placeholder:text-[#808080] outline-none"><svg class="size-[11px]"><use href="#i-search"/></svg></label></div>
            <div class="flex-1 min-h-0 flex overflow-hidden">
              <ul id="lib" class="flex-1 leading-[21px] -mt-px"></ul>
              <div class="w-[8px] mx-[3px] mt-[83px] rounded-t-full bg-[#cbcbcb]"></div>
            </div>
          </div>
          <div class="w-[5px] shrink-0 bg-[#efefef]"></div>
          <div class="flex-1 border-l border-[#c4c6cc]">
            <table id="quota" class="table-fixed w-[450px] border-separate border-spacing-0"></table>
          </div>
        </div>
      </section>
    </div>
  </div>
</div>

<script>
const $ = id => document.getElementById(id);
const subs = ['基础梁(F)','筏板基础(M)','筏板主筋(R)','筏板负筋(X)','基础板带(W)','集水坑(K)','柱墩(Y)','独立基础(D)','条形基础(T)','桩承台(V)','桩(U)','垫层(X)','地沟(G)','砖胎膜'];
const tops = ['常用构件类型','施工段','轴线','柱','墙','门窗洞','梁','板','装配式','楼梯','装修','土方','基础','*','其它','自定义'];
const vip = '<span class="ml-[5px] w-[30px] h-[10px] bg-[#ffd65c] text-[#a97c14] text-[9px] leading-[10px] font-bold text-center font-[\'Liberation_Serif\',serif]">VIP</span>';
function nav(folders) {
  return tops.map(t => {
    if (t === '*') return subs.map((s, i) => `<li class="h-[24px] flex items-center ${folders ? 'pl-[40px]' : 'pl-[23px]'}"><span class="w-[97px] h-[21px] flex items-center ${i === 9 ? (folders ? 'bg-[#b0caec]' : 'bg-[#c8d9ef]') : ''}"><svg class="size-4 ml-[3px] mr-[6px]"><use href="#s-${i}"/></svg>${s}</span></li>`).join('');
    const icon = folders ? `<svg class="size-4 ml-[2px] mr-[5px]"><use href="#${t === '基础' ? 'i-open' : 'i-folder'}"/></svg>` : (t === '基础' ? '<i class="w-px h-[12px] bg-[#edc27b] mr-[5px]"></i>' : '<i class="w-[6px]"></i>');
    return `<li class="h-[24px] flex items-center">${icon}${t}${t === '施工段' || t === '装配式' ? vip : ''}</li>`;
  }).join('');
}
$('navA').innerHTML = nav(false);
$('navB').innerHTML = nav(true);

// number, name, value, flags: b = blue name, g = locked value, c = has check box, e = expandable
const props = [
  [1,'名称','ZCT-1-1','b'],[2,'截面形状','矩形承台','bc'],[3,'长度(mm)','1500','bg'],[4,'宽度(mm)','1500','bg'],[5,'高度(mm)','2000','bg'],
  [6,'相对底标高(m)','(0)','b'],[7,'材质','商品混凝土','bc'],[8,'混凝土类型','(混凝土20石)','bc'],[9,'混凝土强度等级','(C30)','bc'],[10,'混凝土外加剂','(无)','b'],
  [11,'泵送类型','(混凝土泵)','b'],[12,'截面面积(m²)','2.25','bgc'],[13,'备注','','c'],[14,'钢筋业务属性','','ge'],[20,'显示样式','','ge']];
function prop(cols, rows) {
  const head = ['', '属性名称', '属性值', '附加'].map(h => `<th class="h-[21px] p-0 leading-[18px] pt-[2px] bg-[#efefef] border-r border-b border-[#c6c8cc] font-normal text-[#333]">${h}</th>`).join('');
  const body = rows.map(([n, a, v, k]) => `<tr class="leading-[18px]">
    <td class="p-0 pt-[2px] h-[21px] bg-[#efefef] border-r border-b border-[#c6c8cc] text-center text-[#444]">${n}</td>
    <td class="p-0 pt-[2px] pl-[3px] border-r border-b border-[#d0d2d5] ${k.includes('b') ? 'text-[#1f66f0]' : ''}">${k.includes('e') ? '<button aria-label="展开" class="size-[13px] mr-[5px] align-[2px] rounded-xs border border-[#888] bg-white text-[11px] leading-[10px] text-center -ml-px">+</button>' : ''}${a}</td>
    <td class="p-0 pt-[2px] pl-[3px] border-r border-b border-[#d0d2d5] ${k.includes('g') ? 'bg-[#eaeaea] text-[#909090]' : ''}">${v}</td>
    <td class="p-0 border-r border-b border-[#d0d2d5]">${k.includes('c') ? `<input type="checkbox" aria-label="附加 ${a}" class="block mx-auto appearance-none size-[14px] rounded-xs border border-[#777] bg-white">` : ''}</td></tr>`).join('');
  return `<colgroup>${cols}</colgroup><thead><tr>${head}</tr></thead><tbody>${body}</tbody>`;
}
$('propA').innerHTML = prop('<col class="w-[22px]"><col class="w-[101px]"><col class="w-[109px]"><col class="w-[41px]">', props);
$('propB').innerHTML = prop('<col class="w-[22px]"><col class="w-[101px]"><col class="w-[180px]"><col class="w-[41px]">', props.slice(0, 11));

const mono = s => `<span class="text-[11px] font-['Liberation_Mono',monospace]">${s}</span>`;
const method = [
  ['010501005','项','桩承台基础','m3','TJ','体积',''],
  ['A1-5-2','定','现浇建筑物混凝土 其他混凝土基础','m3','TJ','体积','69'],
  ['011702001','项','基础','m2','MBMJ','模板面积',''],
  ['A1-20-13','定','桩承台模板','m2','MBMJ','模板面积','458']];
$('method').innerHTML = `<colgroup><col class="w-[21px]"><col class="w-[111px]"><col class="w-[46px]"><col class="w-[201px]"><col class="w-[201px]"><col class="w-[46px]"><col class="w-[101px]"><col class="w-[151px]"><col></colgroup>
  <thead><tr>${['','编码','类别','名称','项目特征','单位','工程量表达式','表达式说明'].map(h => `<th class="h-[21px] p-0 border-r border-b ${h === '工程量表达式' ? 'bg-[#80baf9] border-[#62a3ec] text-white font-bold' : 'bg-[#efefef] border-[#c6c8cc] text-[#333] font-normal'}">${h}</th>`).join('')}<th class="h-[21px] p-0 pl-[22px] text-left font-normal text-[#333] bg-[#efefef] border-b border-[#c6c8cc] overflow-hidden">单价</th></tr></thead>
  <tbody class="leading-[18px] font-['Noto_Sans_CJK_SC',sans-serif]">${method.map((r, i) => { const p = i % 2 === 0; const td = 'p-0 h-[22px] border-r border-b border-[#cfd1d4]';
    return `<tr class="${p ? 'bg-[#afe9fb]' : 'bg-white'}">
    <td class="p-0 h-[22px] border-r border-b text-center ${i === 3 ? 'bg-[#80baf9] border-[#62a3ec] text-white font-bold' : 'bg-[#efefef] border-[#c6c8cc] text-[#444]'}">${i + 1}</td>
    <td class="${td}"><div class="flex items-center h-[18px] text-[11px]">${p ? '<button aria-label="折叠" class="size-[11px] mx-[4px] rounded-xs border border-[#888] bg-white flex items-center justify-center"><i class="w-[5px] h-px bg-black"></i></button>' : '<i class="self-start w-[17px] h-[10px] ml-[9px] mr-[5px] border-l border-b border-[#dcdcdc]"></i>'}<span class="${p ? 'ml-px' : 'text-[12px]'}">${r[0]}</span></div></td>
    <td class="${td} text-center">${r[1]}</td><td class="${td} pl-[2px]">${r[2]}</td><td class="${td}"></td><td class="${td} text-center">${mono(r[3])}</td>
    <td class="${i === 3 ? 'p-0 h-[22px] border-2 border-[#6aa6e6]' : td + ' pl-[2px]'}">${mono(r[4])}</td><td class="${td} pl-[2px]">${mono(r[4] + '&lt;')}${r[5]}${mono('&gt;')}</td><td class="p-0 border-b border-[#cfd1d4] overflow-hidden ${i === 1 ? 'pl-[32px]' : 'pl-[26px]'}">${mono(r[6])}</td></tr>`; }).join('')}</tbody>`;

const lib = [['c',0,'金属结构工程'],['c',0,'木结构工程'],['c',0,'门窗工程'],['c',0,'屋面及防水工程'],['c',0,'保温、隔热、防腐工程'],['c',0,'拆除工程'],['o',0,'模板工程'],['o',1,'混凝土模板及支撑'],['s',2,'基础模板'],['c',2,'柱模板'],['c',2,'梁模板'],['c',2,'墙模板'],['c',2,'板模板'],['n',2,'楼梯模板']];
const pads = ['pl-[11px]','pl-[31px]','pl-[51px]'];
$('lib').innerHTML = lib.map(([k, d, t]) => k === 's' || k === 'n'
  ? `<li class="ml-[61px] pl-[3px] h-[21px] ${k === 's' ? 'bg-[#c8d8ef]' : ''}">${t}</li>`
  : `<li class="flex items-center h-[21px] gap-[5px] ${pads[d]}"><svg class="size-[8px] mt-[3px]"><use href="#${k === 'o' ? 'i-exp' : 'i-col'}"/></svg>${t}</li>`).join('');

const quota = [['带形基础模板 无筋','4488.55'],['带形基础模板 有筋','5023.85'],['独立基础模板','4786.49'],['杯形基础模板','5569.94'],['满堂基础模板 无梁式','4306.85'],['满堂基础模板 有梁式','4907.74'],['设备基础螺栓套模板(长度) 1m以内','506.38'],['设备基础螺栓套模板(长度) 1m以外','894.6'],['设备基础模板(块体体积m3) 5以内','5401.38'],['设备基础模板(块体体积m3) 20以内','5457.94'],['设备基础模板(块体体积m3) 20以外','5522.1'],['基础垫层模板','2816.93'],['桩承台模板','4587.47']];
$('quota').innerHTML = `<colgroup><col class="w-[21px]"><col class="w-[111px]"><col class="w-[201px]"><col class="w-[46px]"><col class="w-[71px]"></colgroup>
  <thead><tr>${['','编码','名称','单位','单价'].map((h, i) => `<th class="h-[21px] p-0 pt-[2px] leading-[18px] border-r border-b ${i === 1 ? 'bg-[#80baf9] border-[#62a3ec] text-white font-bold' : i === 0 ? 'bg-[#efefef] border-[#bfc1c4]' : 'bg-white border-[#bfc1c4] font-normal'}">${h}</th>`).join('')}</tr></thead>
  <tbody class="leading-[16px] font-['Noto_Sans_CJK_SC',sans-serif]">${quota.map((r, i) => { const td = 'p-0 pb-px h-[19px] border-r border-b border-[#bfc1c4] pl-[2px]'; const last = i === 12;
    return `<tr><td class="p-0 pt-px h-[19px] border-r border-b text-center ${last ? 'bg-[#80baf9] border-[#62a3ec] text-white font-bold' : 'bg-[#efefef] border-[#bfc1c4] text-[#444]'}">${i + 1}</td>
    <td class="${last ? 'p-0 h-[19px] border-2 border-l-0 border-[#808080] pl-[2px] leading-[15px]' : td}">A1-20-${i + 1}</td><td class="${td}">${r[0]}</td><td class="${td} text-[11px]">100m2</td><td class="${td}">${r[1]}</td></tr>`; }).join('')}</tbody>`;
</script>
</body>
</html>
